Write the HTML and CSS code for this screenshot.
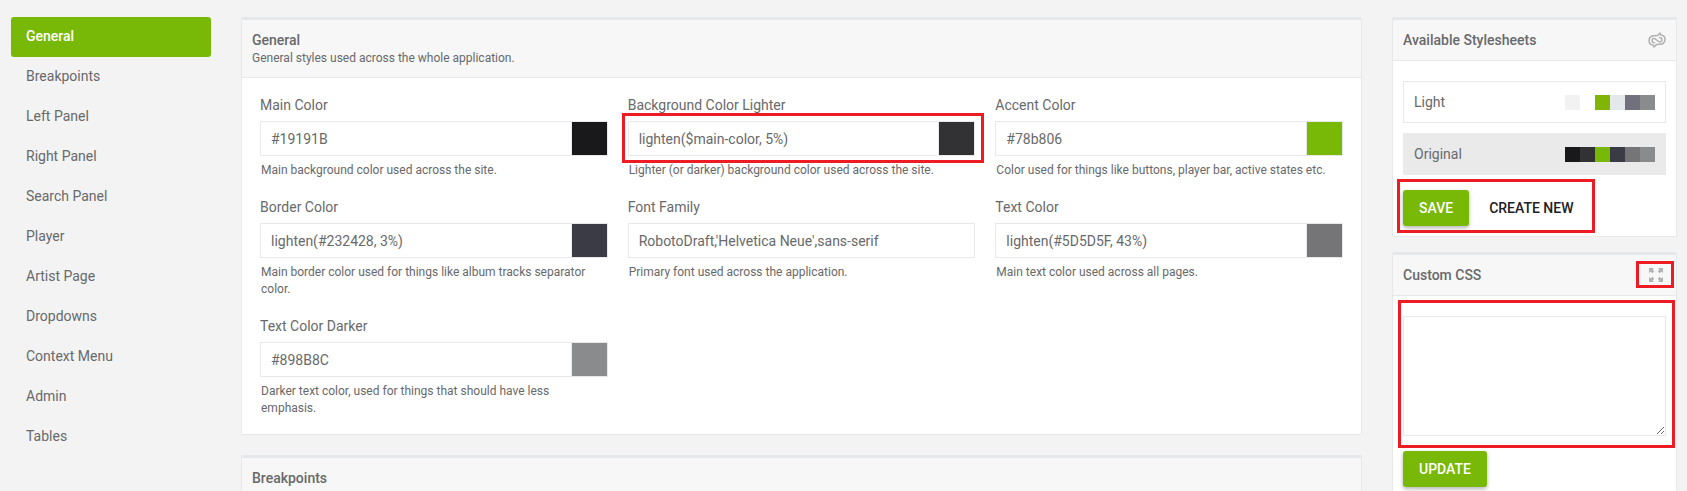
FILE: index.html
```html
<!DOCTYPE html>
<html lang="en">
<head>
<meta charset="utf-8">
<title>Appearance</title>
<link rel="stylesheet" href="styles.css">
</head>
<body>
<div class="layout">
  <nav class="sidebar">
    <a class="nav-item active" href="#general">General</a>
    <a class="nav-item" href="#breakpoints">Breakpoints</a>
    <a class="nav-item" href="#left-panel">Left Panel</a>
    <a class="nav-item" href="#right-panel">Right Panel</a>
    <a class="nav-item" href="#search-panel">Search Panel</a>
    <a class="nav-item" href="#player">Player</a>
    <a class="nav-item" href="#artist-page">Artist Page</a>
    <a class="nav-item" href="#dropdowns">Dropdowns</a>
    <a class="nav-item" href="#context-menu">Context Menu</a>
    <a class="nav-item" href="#admin">Admin</a>
    <a class="nav-item" href="#tables">Tables</a>
  </nav>

  <main class="main">
    <section class="panel" id="general">
      <header class="panel-header">
        <div>
          <h2 class="panel-title">General</h2>
          <p class="panel-subtitle">General styles used across the whole application.</p>
        </div>
      </header>
      <div class="fields">
        <div class="field">
          <label class="label" for="main-color">Main Color</label>
          <div class="control">
            <input class="input" id="main-color" type="text" value="#19191B">
            <button class="swatch main-color" type="button" aria-label="Pick main color"></button>
          </div>
          <p class="help">Main background color used across the site.</p>
        </div>
        <div class="field">
          <label class="label" for="bg-lighter">Background Color Lighter</label>
          <div class="control">
            <input class="input" id="bg-lighter" type="text" value="lighten($main-color, 5%)">
            <button class="swatch bg-lighter" type="button" aria-label="Pick lighter background color"></button>
            <span class="highlight highlight-input"></span>
          </div>
          <p class="help">Lighter (or darker) background color used across the site.</p>
        </div>
        <div class="field">
          <label class="label" for="accent">Accent Color</label>
          <div class="control">
            <input class="input" id="accent" type="text" value="#78b806">
            <button class="swatch accent" type="button" aria-label="Pick accent color"></button>
          </div>
          <p class="help">Color used for things like buttons, player bar, active states etc.</p>
        </div>
        <div class="field">
          <label class="label" for="border-color">Border Color</label>
          <div class="control">
            <input class="input" id="border-color" type="text" value="lighten(#232428, 3%)">
            <button class="swatch border-color" type="button" aria-label="Pick border color"></button>
          </div>
          <p class="help">Main border color used for things like album tracks separator color.</p>
        </div>
        <div class="field">
          <label class="label" for="font-family">Font Family</label>
          <div class="control">
            <input class="input" id="font-family" type="text" value="RobotoDraft,'Helvetica Neue',sans-serif">
          </div>
          <p class="help">Primary font used across the application.</p>
        </div>
        <div class="field">
          <label class="label" for="text-color">Text Color</label>
          <div class="control">
            <input class="input" id="text-color" type="text" value="lighten(#5D5D5F, 43%)">
            <button class="swatch text-color" type="button" aria-label="Pick text color"></button>
          </div>
          <p class="help">Main text color used across all pages.</p>
        </div>
        <div class="field">
          <label class="label" for="text-darker">Text Color Darker</label>
          <div class="control">
            <input class="input" id="text-darker" type="text" value="#898B8C">
            <button class="swatch text-darker" type="button" aria-label="Pick darker text color"></button>
          </div>
          <p class="help">Darker text color, used for things that should have less emphasis.</p>
        </div>
      </div>
    </section>

    <section class="panel" id="breakpoints">
      <header class="panel-header">
        <h2 class="panel-title">Breakpoints</h2>
      </header>
    </section>
  </main>

  <aside class="aside">
    <section class="panel">
      <header class="panel-header">
        <h2 class="panel-title">Available Stylesheets</h2>
        <button class="icon-button" type="button" aria-label="Reset stylesheets">
          <svg width="18" height="16" viewBox="0 0 18 16" fill="none" stroke="#aeafb0" stroke-width="1.500" stroke-linejoin="round">
            <path d="M9.500 3.500L12 1L12.800 3C15.300 3.200 17 5.200 17 7.500C17 10.500 14.500 12.600 11.500 12.200L8.500 12.500L6 15L5.200 13C2.700 12.800 1 10.800 1 8.500C1 5.500 3.500 3.400 6.500 3.800Z"/>
            <path d="M7 10.500C5.800 10.900 4 10.300 4 8.500C4 6.700 6 5.900 7.400 7L10.600 9.500C12 10.500 14 9.500 14 7.700C14 5.900 12.200 5.200 11 5.600"/>
          </svg>
        </button>
      </header>
      <div class="panel-body">
        <div class="sheets">
          <button class="sheet" type="button">
            <span>Light</span>
            <span class="palette"><i class="chip light-bg"></i><i class="chip white"></i><i class="chip light-accent"></i><i class="chip light-border"></i><i class="chip light-text"></i><i class="chip text-darker"></i></span>
          </button>
          <button class="sheet selected" type="button">
            <span>Original</span>
            <span class="palette"><i class="chip main-color"></i><i class="chip bg-lighter"></i><i class="chip accent"></i><i class="chip border-color"></i><i class="chip text-color"></i><i class="chip text-darker"></i></span>
          </button>
        </div>
        <div class="actions">
          <button class="button primary" type="button">SAVE</button>
          <button class="button" type="button">CREATE NEW</button>
          <span class="highlight highlight-actions"></span>
        </div>
      </div>
    </section>

    <section class="panel">
      <header class="panel-header">
        <h2 class="panel-title"><label for="custom-css">Custom CSS</label></h2>
        <button class="icon-button expand" type="button" aria-label="Expand editor">
          <svg width="14" height="14" viewBox="0 0 14 14" fill="#b0b1b2">
            <path d="M0 0H5L3.500 1.500L5.300 3.300L3.300 5.300L1.500 3.500L0 5Z"/>
            <path d="M14 0V5L12.500 3.500L10.700 5.300L8.700 3.300L10.500 1.500L9 0Z"/>
            <path d="M0 14V9L1.500 10.500L3.300 8.700L5.300 10.700L3.500 12.500L5 14Z"/>
            <path d="M14 14H9L10.500 12.500L8.700 10.700L10.700 8.700L12.500 10.500L14 9Z"/>
          </svg>
          <span class="highlight highlight-icon"></span>
        </button>
      </header>
      <div class="panel-body">
        <div class="editor">
          <textarea class="textarea" id="custom-css"></textarea>
          <span class="highlight highlight-editor"></span>
        </div>
        <div class="actions">
          <button class="button primary" type="button">UPDATE</button>
        </div>
      </div>
    </section>
  </aside>
</div>
</body>
</html>
```

FILE: styles.css
```css
* {
  box-sizing: border-box;
}

body {
  margin: 0;
  height: 100vh;
  overflow: hidden;
  background: #f3f3f3;
  color: #68696b;
  font: 14px/20px Roboto, "Liberation Sans", sans-serif;
}

button,
input,
textarea {
  margin: 0;
  color: inherit;
  font: inherit;
}

h2,
p {
  margin: 0;
}

.layout {
  display: grid;
  grid-template-columns: 200px minmax(0, 1fr) 285px;
  gap: 30px;
  padding: 17px 10px 0 11px;
  align-items: start;
}

/* Sidebar */

.nav-item {
  display: block;
  padding: 9px 15px 11px;
  border-radius: 3px;
  color: inherit;
  text-decoration: none;
}

.nav-item.active {
  background: #78b806;
  color: #fff;
  font-weight: 500;
}

/* Panels */

.main,
.aside {
  display: flex;
  flex-direction: column;
  gap: 20px;
}

.aside {
  gap: 15px;
}

.panel {
  border: 1px solid #e6e8ea;
  border-top: 3px solid #e4e8eb;
  border-radius: 2px;
  background: #fff;
}

.panel-header {
  display: flex;
  align-items: center;
  justify-content: space-between;
  padding: 10px;
  border-bottom: 1px solid #e6e8ea;
  background: #f7f7f7;
}

.panel-title {
  font-size: 14px;
  font-weight: 500;
}

.panel-subtitle {
  font-size: 12px;
  line-height: 17px;
}

.icon-button {
  position: relative;
  display: flex;
  padding: 0;
  border: 0;
  background: none;
}

.icon-button.expand {
  margin-right: 3px;
}

.panel-body {
  padding: 20px 10px 10px;
}

/* Form fields */

.fields {
  display: grid;
  grid-template-columns: repeat(3, minmax(0, 1fr));
  gap: 18px 20px;
  padding: 17px 18px;
}

.label {
  display: block;
  margin-bottom: 6px;
}

.control {
  position: relative;
  display: flex;
  height: 35px;
  border: 1px solid #e6e8ea;
  background: #fff;
}

.input {
  flex: 1;
  min-width: 0;
  padding: 0 10px;
  border: 0;
  background: none;
  outline: 0;
}

.swatch {
  width: 36px;
  padding: 0;
  border: 0;
  border-left: 1px solid #e6e8ea;
}

.help {
  margin-top: 6px;
  padding: 0 1px;
  font-size: 12px;
  line-height: 17px;
}

/* Stylesheet list */

.sheets {
  display: flex;
  flex-direction: column;
  gap: 10px;
}

.sheet {
  display: flex;
  align-items: center;
  justify-content: space-between;
  height: 42px;
  padding: 0 10px;
  border: 1px solid #e6e8ea;
  background: #fff;
}

.sheet.selected {
  border-color: #eaeaea;
  background: #eaeaea;
}

.palette {
  display: flex;
}

.chip {
  width: 15px;
  height: 15px;
}

.main-color { background: #19191b; }
.bg-lighter { background: #323234; }
.accent { background: #78b806; }
.border-color { background: #3b3b45; }
.text-color { background: #757577; }
.text-darker { background: #898b8c; }
.light-bg { background: #f2f2f2; }
.white { background: #fff; }
.light-accent { background: #80b405; }
.light-border { background: #e4e8eb; }
.light-text { background: #71717d; }

/* Buttons */

.actions {
  position: relative;
  display: flex;
  gap: 4px;
  margin-top: 15px;
}

.button {
  height: 36px;
  padding: 0 16px;
  border: 0;
  border-radius: 3px;
  background: none;
  color: #212121;
  font-weight: 500;
}

.button.primary {
  background: #78b806;
  box-shadow: 0 2px 4px rgba(0, 0, 0, 0.3);
  color: #fff;
}

/* Custom CSS editor */

.editor {
  position: relative;
  display: flex;
}

.textarea {
  width: 100%;
  height: 120px;
  border: 1px solid #e6e8ea;
  border-radius: 0;
  background: #fff;
  outline: 0;
  resize: vertical;
}

/* Callout frames drawn over the controls */

.highlight {
  position: absolute;
  border: 3px solid #ed1c24;
  pointer-events: none;
}

.highlight-input { inset: -9px -10px -8px -7px; }
.highlight-actions { inset: -11px 71px -7px -6px; }
.highlight-icon { inset: -7px -11px -6px -13px; }
.highlight-editor { inset: -16px -9px -12px -5px; }
```
